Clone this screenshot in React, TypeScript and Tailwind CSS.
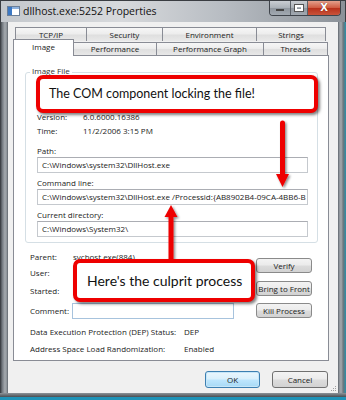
import React from "react";

const tabsTop = [
  { label: "TCP/IP", w: "w-[72px]" },
  { label: "Security", w: "w-[76px]" },
  { label: "Environment", w: "w-[94px]" },
  { label: "Strings", w: "w-[69px]" },
];

const tabsBottom = [
  { label: "Performance", w: "w-[83px]" },
  { label: "Performance Graph", w: "w-[107px]" },
  { label: "Threads", w: "w-[64px]" },
];

const tabBg =
  "bg-[linear-gradient(to_bottom,#f6f6f6,#ededed_45%,#dfdfdf_55%,#e8e8e8)]";
const btnBg =
  "bg-[linear-gradient(to_bottom,#f3f3f3,#ebebeb_48%,#dcdcdc_52%,#d2d2d2)]";

function TextBox({ children }: { children?: React.ReactNode }) {
  return (
    <div className="h-[16px] w-[271px] border border-[#c5c9ce] border-t-[#abadb3] bg-white flex items-center pl-[4px] whitespace-nowrap overflow-hidden">
      {children}
    </div>
  );
}

function Btn({ children }: { children: React.ReactNode }) {
  return (
    <div
      className={`w-[56px] h-[15px] rounded-[3px] border border-[#8a8a8a] ${btnBg} flex items-center justify-center whitespace-nowrap text-[#222]`}
    >
      {children}
    </div>
  );
}

export default function App() {
  return (
    <div className="relative w-[346px] h-[400px] overflow-hidden bg-[#8e949b] font-['Open_Sans',sans-serif] text-[8px] leading-none text-[#222]">
      {/* Title bar */}
      <div className="h-[22px] flex items-start border-t border-l border-r border-[#3a3d42] bg-[linear-gradient(to_right,#c4c8cd,#d7d9dc_35%,#b7bcc2_65%,#8b9198)]">
        <div className="mt-[5px] ml-[6px] w-[13px] h-[10px] border border-[#6b7f99] bg-white flex">
          <div className="w-[4px] h-full bg-[#3b78c4]" />
          <div className="flex-1 flex flex-col">
            <div className="h-[2px] bg-[#8fb3e0]" />
          </div>
        </div>
        <div className="mt-[5px] ml-[3px] text-[10.5px] text-[#111] whitespace-nowrap font-['Open_Sans',sans-serif]">
          dllhost.exe:5252 Properties
        </div>
        <div className="ml-auto mr-[4px] h-[15px] w-[72px] flex rounded-b-[4px] border border-t-0 border-[#3f444b] overflow-hidden">
          <div className="w-[21px] h-full bg-[linear-gradient(to_bottom,#c9cdd2,#aab0b7_50%,#8f969e_51%,#a2a9b1)] border-r border-[#5b6168] flex items-end justify-center pb-[4px]">
            <div className="w-[8px] h-[2px] bg-white border border-[#444]" />
          </div>
          <div className="w-[17px] h-full bg-[linear-gradient(to_bottom,#c9cdd2,#aab0b7_50%,#8f969e_51%,#a2a9b1)] border-r border-[#5b6168] flex items-center justify-center">
            <div className="w-[8px] h-[6px] border-[2px] border-white outline outline-1 outline-[#555]" />
          </div>
          <div className="flex-1 h-full bg-[linear-gradient(to_bottom,#e4a08c,#cf5a40_50%,#b8301a_51%,#c9533a)] flex items-center justify-center">
            <span className="text-white text-[10px] font-bold font-['DejaVu_Sans',sans-serif] [text-shadow:0_0_1px_#500]">
              X
            </span>
          </div>
        </div>
      </div>

      {/* Body */}
      <div className="flex h-[371px]">
        <div className="w-[7px] h-full bg-[linear-gradient(to_right,#2f3236,#6f757c_30%,#a4a9ae_70%,#8a9096)]" />
        <div className="w-[332px] h-full bg-[#f0f0f0] border-x border-[#6f757c] relative">
          {/* Tabs row 1 */}
          <div className="ml-[7px] mt-[5px] flex h-[14px]">
            {tabsTop.map((t, i) => (
              <div
                key={t.label}
                className={`${t.w} h-full ${tabBg} border-t border-r border-[#898c95] ${
                  i === 0 ? "border-l" : ""
                } flex items-center justify-center whitespace-nowrap`}
              >
                {t.label}
              </div>
            ))}
          </div>
          {/* Tabs row 2 */}
          <div className="ml-[5px] mt-[-2px] flex items-end h-[16px]">
            <div className="relative z-10 w-[61px] h-[17px] mb-[-1px] bg-white border-t border-x border-[#898c95] flex items-start justify-center pt-[3px]">
              Image
            </div>
            {tabsBottom.map((t) => (
              <div
                key={t.label}
                className={`${t.w} h-[13px] ${tabBg} border-t border-r border-[#898c95] flex items-center justify-center whitespace-nowrap`}
              >
                {t.label}
              </div>
            ))}
          </div>

          {/* Panel */}
          <div className="ml-[5px] w-[316px] h-[306px] border border-[#898c95] bg-white">
            {/* Group box */}
            <div className="relative ml-[11px] mt-[16px] w-[293px] h-[171px] border border-[#d5dfe5] rounded-[3px] pl-[11px]">
              <div className="absolute left-[4px] top-[-6px] bg-white px-[2px] text-[#333]">
                Image File
              </div>
              <div className="h-[37px]" />
              <div className="h-[14px] flex items-center">
                <span className="w-[46px]">Version:</span>
                <span>6.0.6000.16386</span>
              </div>
              <div className="h-[14px] flex items-center">
                <span className="w-[46px]">Time:</span>
                <span>11/2/2006 3:15 PM</span>
              </div>
              <div className="mt-[6px] h-[13px] flex items-center">Path:</div>
              <TextBox>C:\Windows\system32\DllHost.exe</TextBox>
              <div className="mt-[3px] h-[13px] flex items-center">
                Command line:
              </div>
              <TextBox>
                C:\Windows\system32\DllHost.exe /Processid:{"{AB8902B4-09CA-4BB6-B"}
              </TextBox>
              <div className="mt-[3px] h-[13px] flex items-center">
                Current directory:
              </div>
              <TextBox>C:\Windows\System32\</TextBox>
            </div>

            {/* Lower section */}
            <div className="flex pl-[16px]">
              <div className="w-[226px] pt-[7px]">
                <div className="h-[14px] flex items-center">
                  <span className="w-[43px]">Parent:</span>
                  <span>svchost.exe(884)</span>
                </div>
                <div className="mt-[2px] h-[14px] flex items-center">
                  <span className="w-[43px]">User:</span>
                </div>
                <div className="mt-[4px] h-[14px] flex items-center">
                  <span className="w-[43px]">Started:</span>
                </div>
                <div className="mt-[5px] h-[16px] flex items-center">
                  <span className="w-[42px]">Comment:</span>
                  <div className="w-[162px] h-[16px] border border-[#a7c3dd] bg-white" />
                </div>
              </div>
              <div className="pt-[15px] flex flex-col">
                <Btn>Verify</Btn>
                <div className="mt-[8px]">
                  <Btn>Bring to Front</Btn>
                </div>
                <div className="mt-[7px]">
                  <Btn>Kill Process</Btn>
                </div>
              </div>
            </div>

            <div className="pl-[16px] mt-[6px] h-[14px] flex items-center">
              <span className="w-[154px]">Data Execution Protection (DEP) Status:</span>
              <span>DEP</span>
            </div>
            <div className="pl-[16px] mt-[3px] h-[14px] flex items-center">
              <span className="w-[154px]">Address Space Load Randomization:</span>
              <span>Enabled</span>
            </div>
          </div>

          {/* Dialog buttons */}
          <div className="mt-[10px] ml-[197px] flex gap-[12px]">
            <div className="w-[55px] h-[17px] rounded-[3px] border border-[#3c7fb1] bg-[linear-gradient(to_bottom,#eaf6fd,#d9f0fc_48%,#bee6fd_52%,#a7d9f5)] shadow-[inset_0_0_0_1px_#c6e6f8] flex items-center justify-center">
              OK
            </div>
            <div
              className={`w-[56px] h-[17px] rounded-[3px] border border-[#707070] ${btnBg} flex items-center justify-center`}
            >
              Cancel
            </div>
          </div>
          {/* size grip */}
          <svg className="absolute right-[1px] bottom-[1px]" width="7" height="7" viewBox="0 0 7 7">
            <rect x="5" y="1" width="1" height="1" fill="#a0a0a0" />
            <rect x="3" y="3" width="1" height="1" fill="#a0a0a0" />
            <rect x="5" y="3" width="1" height="1" fill="#a0a0a0" />
            <rect x="1" y="5" width="1" height="1" fill="#a0a0a0" />
            <rect x="3" y="5" width="1" height="1" fill="#a0a0a0" />
            <rect x="5" y="5" width="1" height="1" fill="#a0a0a0" />
          </svg>
        </div>
        <div className="w-[7px] h-full bg-[linear-gradient(to_right,#8a9096,#a4a9ae_30%,#6f757c_60%,#2a8fa8)]" />
      </div>
      {/* Bottom frame */}
      <div className="h-[7px] flex flex-col">
        <div className="h-[4px] bg-[linear-gradient(to_bottom,#8d9399,#4a4e53)]" />
        <div className="h-[3px] bg-[#1f93b8]" />
      </div>

      {/* Arrows */}
      <svg
        className="absolute left-0 top-0 pointer-events-none"
        width="346"
        height="400"
        viewBox="0 0 346 400"
      >
        <defs>
          <filter id="sh" x="-50%" y="-50%" width="200%" height="200%">
            <feDropShadow dx="1.5" dy="1.5" stdDeviation="1.2" floodColor="#000" floodOpacity="0.45" />
          </filter>
        </defs>
        <g filter="url(#sh)">
          <line x1="282.5" y1="123" x2="282.5" y2="177" stroke="#ee0000" strokeWidth="5" strokeLinecap="round" />
          <polygon points="276,174 289,174 282.5,187" fill="#ee0000" />
          <line x1="171" y1="213" x2="171" y2="262" stroke="#ee0000" strokeWidth="5" />
          <polygon points="164.5,217 177.5,217 171,205" fill="#ee0000" />
        </g>
      </svg>

      {/* Callout 1 */}
      <div className="absolute left-[36px] top-[75px] w-[282px] h-[38px] bg-white border-[4px] border-[#ee0000] rounded-[7px] shadow-[2px_2px_3px_rgba(0,0,0,0.5)] flex items-center pl-[9px] font-['Lato',sans-serif] text-[12.5px] text-[#111] whitespace-nowrap">
        The COM component locking the file!
      </div>
      {/* Callout 2 */}
      <div className="absolute left-[73px] top-[259px] w-[182px] h-[43px] bg-white border-[4px] border-[#ee0000] rounded-[7px] shadow-[2px_2px_3px_rgba(0,0,0,0.5)] flex items-center pl-[10px] font-['Lato',sans-serif] text-[14px] text-[#111] whitespace-nowrap">
        Here's the culprit process
      </div>
    </div>
  );
}
